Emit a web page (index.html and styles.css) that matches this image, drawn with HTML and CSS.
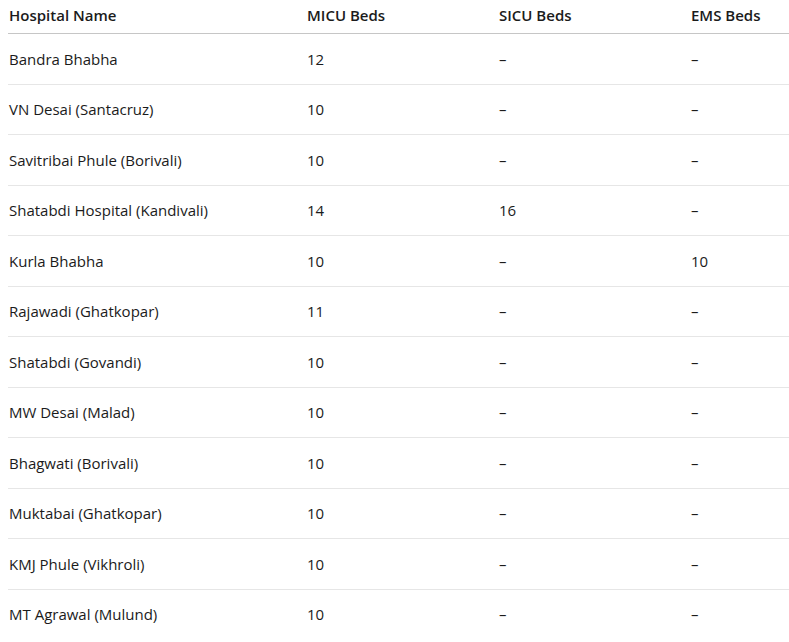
FILE: index.html
```html
<!DOCTYPE html>
<html lang="en">
<head>
<meta charset="utf-8">
<title>Hospital Beds</title>
<link rel="stylesheet" href="styles.css">
</head>
<body>
<table class="beds">
  <colgroup>
    <col class="c1"><col class="c2"><col class="c3"><col class="c4">
  </colgroup>
  <thead>
    <tr><th>Hospital Name</th><th>MICU Beds</th><th>SICU Beds</th><th>EMS Beds</th></tr>
  </thead>
  <tbody>
    <tr><td>Bandra Bhabha</td><td>12</td><td>–</td><td>–</td></tr>
    <tr><td>VN Desai (Santacruz)</td><td>10</td><td>–</td><td>–</td></tr>
    <tr><td>Savitribai Phule (Borivali)</td><td>10</td><td>–</td><td>–</td></tr>
    <tr><td>Shatabdi Hospital (Kandivali)</td><td>14</td><td>16</td><td>–</td></tr>
    <tr><td>Kurla Bhabha</td><td>10</td><td>–</td><td>10</td></tr>
    <tr><td>Rajawadi (Ghatkopar)</td><td>11</td><td>–</td><td>–</td></tr>
    <tr><td>Shatabdi (Govandi)</td><td>10</td><td>–</td><td>–</td></tr>
    <tr><td>MW Desai (Malad)</td><td>10</td><td>–</td><td>–</td></tr>
    <tr><td>Bhagwati (Borivali)</td><td>10</td><td>–</td><td>–</td></tr>
    <tr><td>Muktabai (Ghatkopar)</td><td>10</td><td>–</td><td>–</td></tr>
    <tr><td>KMJ Phule (Vikhroli)</td><td>10</td><td>–</td><td>–</td></tr>
    <tr><td>MT Agrawal (Mulund)</td><td>10</td><td>–</td><td>–</td></tr>
  </tbody>
</table>
</body>
</html>
```
FILE: styles.css
```css
html, body {
  margin: 0;
  padding: 0;
  background: #ffffff;
  overflow: hidden;
}
body {
  font-family: "Open Sans", "Noto Sans", sans-serif;
  font-size: 15px;
  color: #1b1b1b;
}
.beds {
  margin-left: 8px;
  width: calc(100% - 8px);
  border-collapse: collapse;
  table-layout: fixed;
}
.c1 { width: 298px; }
.c2 { width: 192px; }
.c3 { width: 192px; }
.beds th {
  text-align: left;
  font-weight: 600;
  line-height: 20px;
  padding: 5px 0 8px 1px;
  border-bottom: 1px solid #c6c6c6;
  white-space: nowrap;
}
.beds td {
  line-height: 20px;
  padding: 14.75px 0 14.75px 1px;
  border-bottom: 1px solid #e6e6e6;
  white-space: nowrap;
}
.beds tbody tr:last-child td {
  border-bottom: none;
}
```
